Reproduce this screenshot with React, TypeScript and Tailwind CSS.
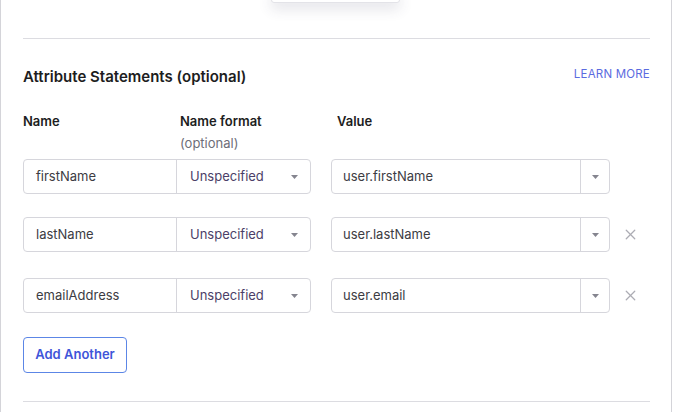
import { X } from 'lucide-react';

type Row = { name: string; value: string; removable: boolean };

const rows: Row[] = [
  { name: 'firstName', value: 'user.firstName', removable: false },
  { name: 'lastName', value: 'user.lastName', removable: true },
  { name: 'emailAddress', value: 'user.email', removable: true },
];

function Caret() {
  return (
    <svg width="7" height="4" viewBox="0 0 7 4" className="shrink-0">
      <path d="M0 0h7L3.5 4z" fill="#85858f" />
    </svg>
  );
}

function StatementRow({ row }: { row: Row }) {
  return (
    <div className="flex items-center h-[35px]">
      {/* Name input + format select share one border */}
      <div className="flex h-full w-[288px] border border-[#d6d6dc] rounded-[4px]">
        <div className="w-[153px] flex items-center pl-[12px] text-[13px] text-[#3c3c43] border-r border-[#d6d6dc]">
          {row.name}
        </div>
        <div className="flex-1 flex items-center justify-between pl-[13px] pr-[12px] text-[13px] text-[#4c3f68]">
          <span>Unspecified</span>
          <Caret />
        </div>
      </div>

      {/* Value combobox */}
      <div className="ml-[20px] flex h-full w-[279px] border border-[#d6d6dc] rounded-[4px]">
        <div className="flex-1 flex items-center pl-[11px] text-[13px] text-[#3c3c43] border-r border-[#d6d6dc]">
          {row.value}
        </div>
        <div className="w-[28px] flex items-center justify-center">
          <Caret />
        </div>
      </div>

      {row.removable && (
        <button className="ml-[12px] text-[#acacb4]" aria-label="Remove">
          <X className="w-[17px] h-[17px]" strokeWidth={1.8} />
        </button>
      )}
    </div>
  );
}

export default function App() {
  return (
    <div
      className="relative w-[673px] h-[412px] bg-white overflow-hidden"
      style={{ fontFamily: 'Inter, "Noto Sans", Arial, sans-serif' }}
    >
      {/* dropdown menu peeking in from above */}
      <div className="absolute left-[271px] top-[-10px] w-[129px] h-[13px] bg-white border border-[#e3e3e8] rounded-[3px] shadow-[0_6px_14px_rgba(60,60,90,0.14)] z-10" />

      <div className="h-full border-l border-r border-[#d4d4d9] pl-[22px] pr-[21px] pt-[38px] mr-[1px]">
        <div className="border-t border-[#dcdce1]" />

        <div className="flex items-start justify-between mt-[28px]">
          <h2 className="text-[15px] leading-[20px] font-semibold text-[#1d1d21]">
            Attribute Statements (optional)
          </h2>
          <a className="text-[11.5px] leading-[14px] mt-[0px] text-[#5b6be0] tracking-[0.2px]">LEARN MORE</a>
        </div>

        {/* Column headers */}
        <div className="flex mt-[25px] text-[13px] leading-[18px] text-[#1d1d21]">
          <div className="w-[157px] font-semibold">Name</div>
          <div className="w-[157px]">
            <div className="font-semibold">Name format</div>
            <div className="mt-[4px] text-[#6e6e78]">(optional)</div>
          </div>
          <div className="font-semibold">Value</div>
        </div>

        <div className="mt-[7px]">
          <StatementRow row={rows[0]} />
        </div>
        <div className="mt-[23px]">
          <StatementRow row={rows[1]} />
        </div>
        <div className="mt-[26px]">
          <StatementRow row={rows[2]} />
        </div>

        <button className="mt-[24px] w-[104px] h-[36px] border border-[#5c86e6] rounded-[4px] text-[13px] font-semibold text-[#3f55d9]">
          Add Another
        </button>

        <div className="mt-[28px] border-t border-[#dcdce1]" />
      </div>
    </div>
  );
}
